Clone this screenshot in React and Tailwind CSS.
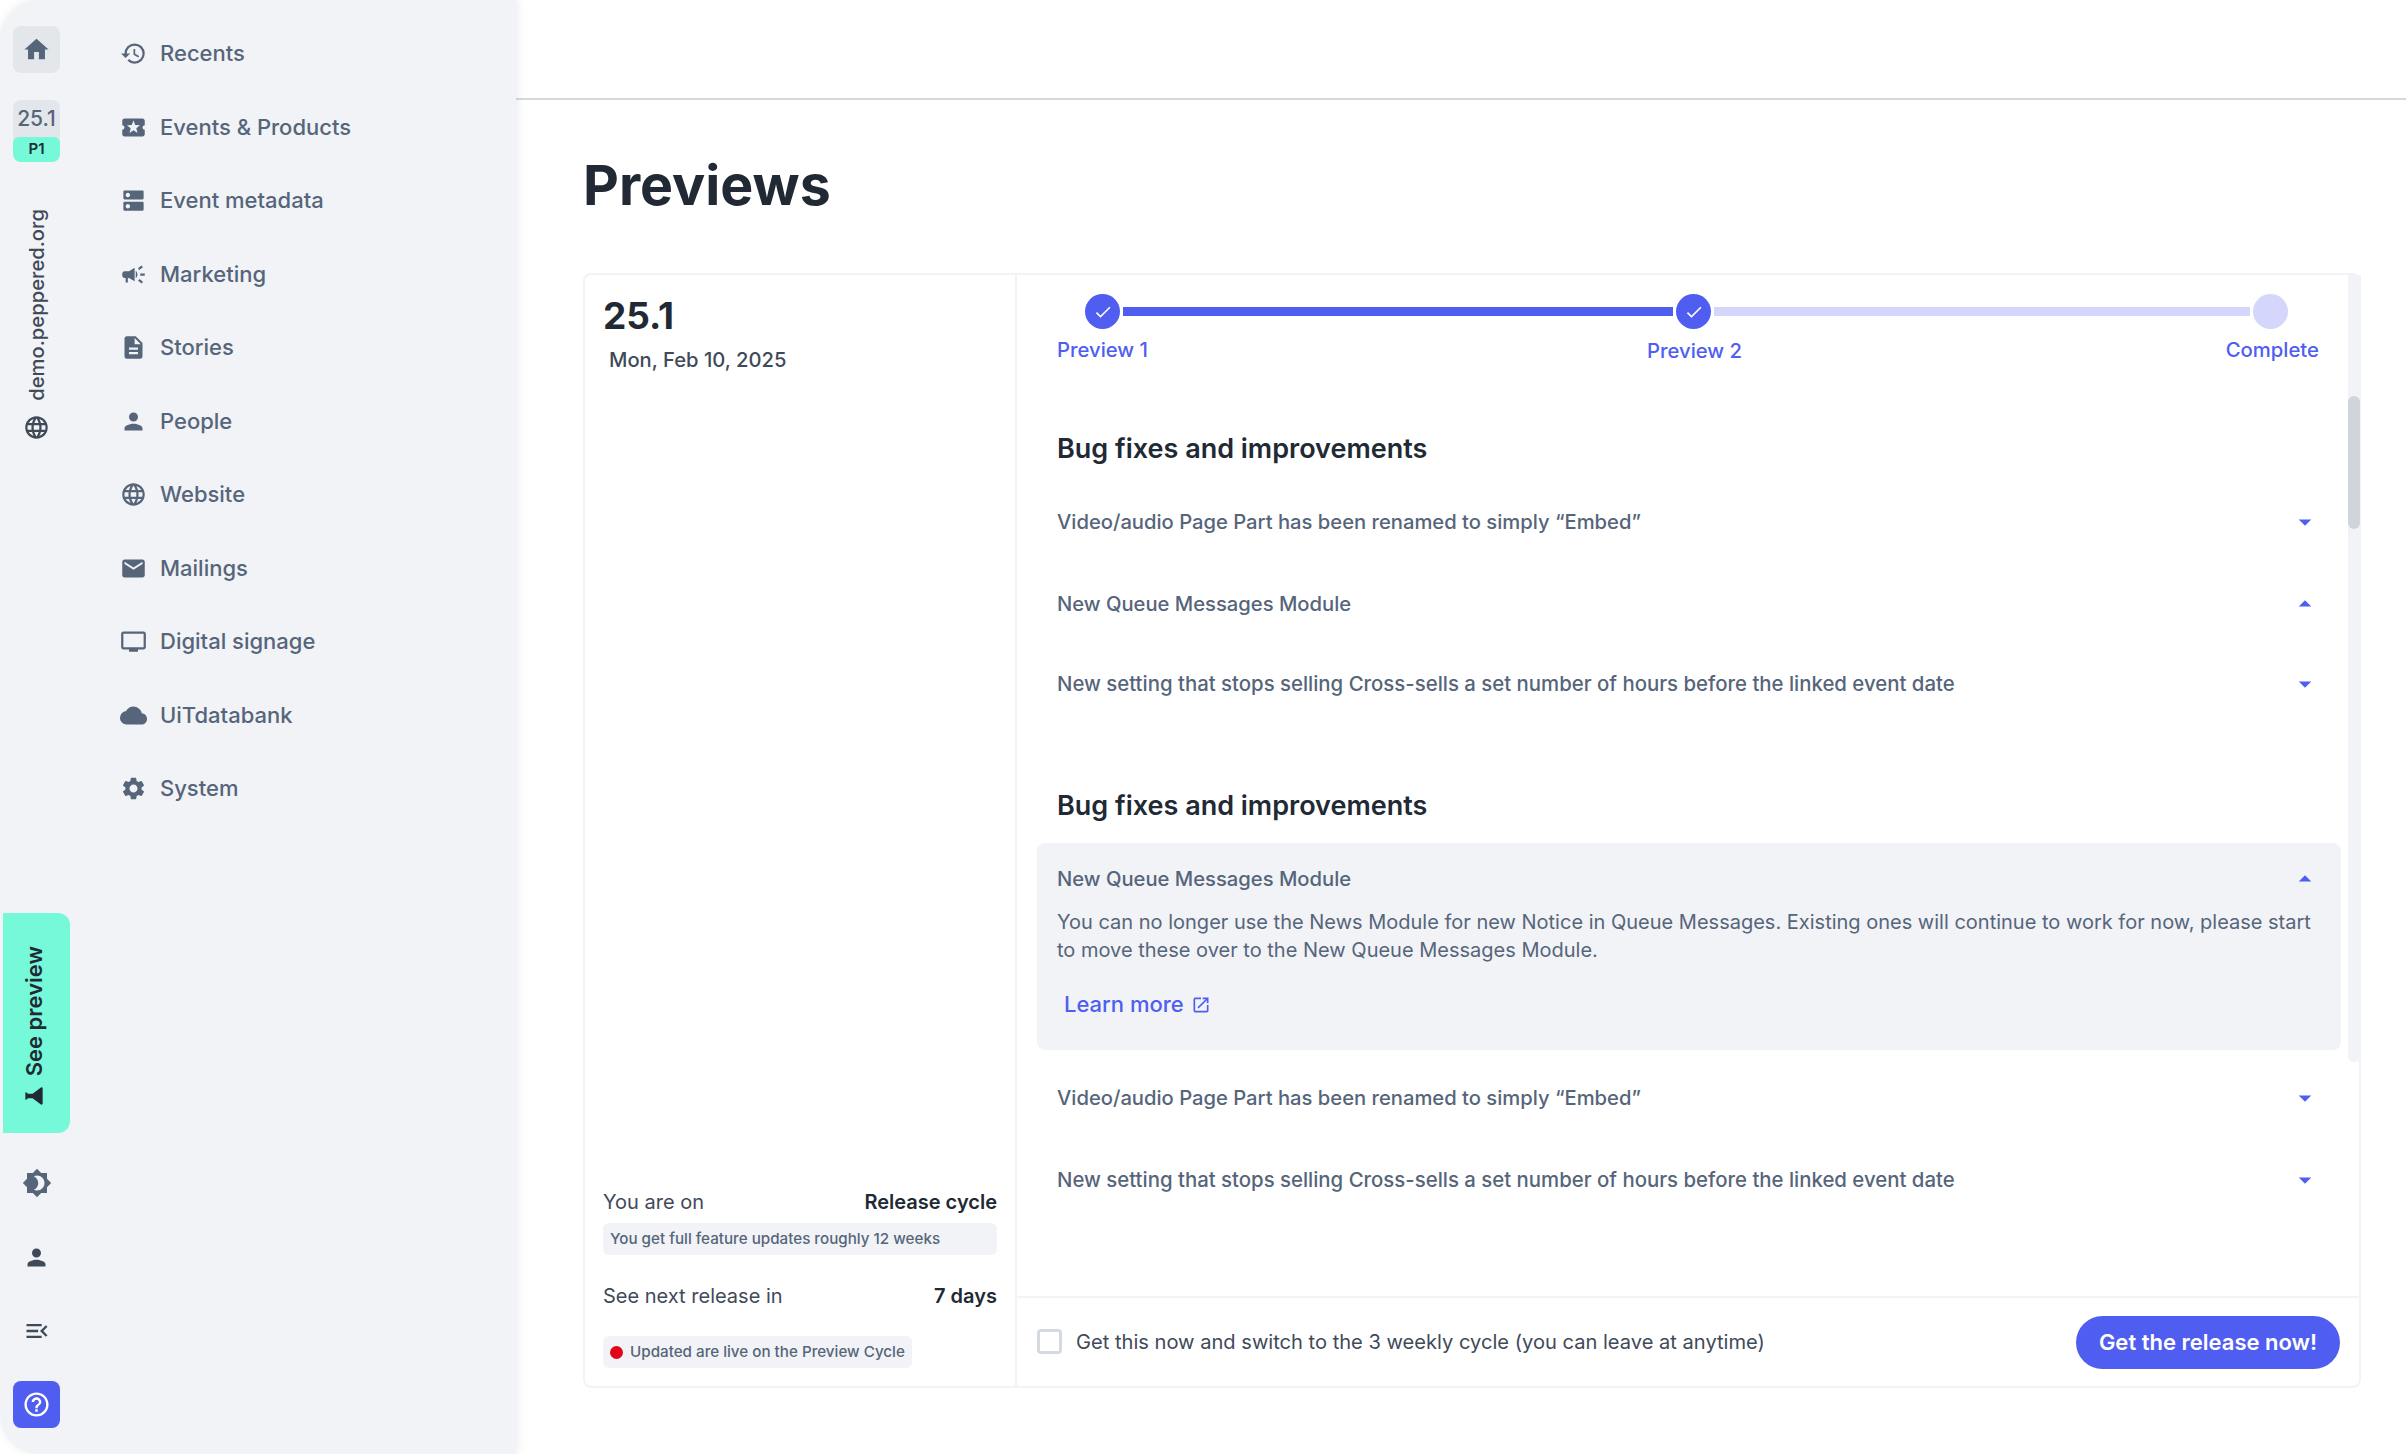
import React from "react";
import {
  MdHome, MdHistory, MdLocalActivity, MdDns, MdCampaign, MdDescription, MdPerson,
  MdLanguage, MdEmail, MdTv, MdCloud, MdSettings, MdBrightness4, MdMenuOpen,
  MdHelpOutline, MdScience, MdOpenInNew, MdArrowDropDown, MdArrowDropUp, MdCheck
} from "react-icons/md";

const navItems = [
  { label: "Recents", icon: MdHistory },
  { label: "Events & Products", icon: MdLocalActivity },
  { label: "Event metadata", icon: MdDns },
  { label: "Marketing", icon: MdCampaign },
  { label: "Stories", icon: MdDescription },
  { label: "People", icon: MdPerson },
  { label: "Website", icon: MdLanguage },
  { label: "Mailings", icon: MdEmail },
  { label: "Digital signage", icon: MdTv },
  { label: "UiTdatabank", icon: MdCloud },
  { label: "System", icon: MdSettings },
];

function Rail() {
  return (
    <div className="w-[73px] shrink-0 flex flex-col items-center pt-[26px] pb-[26px]">
      <div className="w-[47px] h-[47px] rounded-lg bg-[#e3e6eb] flex items-center justify-center text-[#56657a]">
        <MdHome size={29} />
      </div>
      <div className="mt-[27px] w-[47px] h-[62px] rounded-lg bg-[#e3e6eb] flex flex-col items-center overflow-hidden">
        <div className="h-[37px] flex items-center text-[21px] font-medium text-[#56657a]">25.1</div>
        <div className="w-full h-[25px] rounded-md bg-[#76f9d8] flex items-center justify-center text-[15px] font-semibold text-[#212a34]">P1</div>
      </div>
      <div className="mt-[47px] [writing-mode:vertical-rl] rotate-180 text-[20.2px] font-medium leading-[24px] text-[#3f4a59]">
        demo.peppered.org
      </div>
      <MdLanguage size={27} className="mt-[13px] text-[#3f4a59]" />

      <div className="mt-auto w-[67px] h-[220px] rounded-r-xl bg-[#76f9d8] pt-[9px] pr-[6px] flex flex-col items-center justify-center gap-[6px] text-[#212a34]">
        <div className="[writing-mode:vertical-rl] rotate-180 text-[22px] font-semibold leading-[24px]">See preview</div>
        <MdScience size={26} className="-rotate-90" />
      </div>
      <div className="mt-[35px] h-[30px] flex items-center text-[#56657a]"><MdBrightness4 size={30} /></div>
      <div className="mt-[44px] h-[30px] flex items-center text-[#3f4a59]"><MdPerson size={27} /></div>
      <div className="mt-[44px] h-[30px] flex items-center text-[#3f4a59]"><MdMenuOpen size={28} /></div>
      <div className="mt-[35px] w-[47px] h-[47px] rounded-lg bg-[#4f5ef0] flex items-center justify-center text-white">
        <MdHelpOutline size={29} />
      </div>
    </div>
  );
}

function Sidebar() {
  return (
    <aside className="relative z-10 w-[516px] shrink-0 h-full flex bg-[#f1f3f7] rounded-l-[40px] shadow-[1px_0_8px_rgba(60,70,90,0.12)]">
      <Rail />
      <nav className="flex flex-col pt-[17px] pl-[46px]">
        {navItems.map(({ label, icon: Icon }) => (
          <div key={label} className="h-[73.5px] flex items-center text-[#56657a]">
            <span className="w-[28px] flex justify-center"><Icon size={27} /></span>
            <span className="ml-[13px] text-[22px] font-medium">{label}</span>
          </div>
        ))}
      </nav>
    </aside>
  );
}

function Row({ title, height = "h-[80px]", size = "text-[20.2px]" }) {
  return (
    <div className={`${height} pl-[20px] pr-[21px] flex items-center justify-between`}>
      <span className={`${size} font-medium text-[#56657a]`}>{title}</span>
      <MdArrowDropDown size={30} className="text-[#4f5ef0]" />
    </div>
  );
}

function OpenRow({ title }) {
  return (
    <div className="h-[80px] pl-[20px] pr-[21px] flex items-center justify-between">
      <span className="text-[20.2px] font-medium text-[#56657a]">{title}</span>
      <MdArrowDropUp size={30} className="text-[#4f5ef0]" />
    </div>
  );
}

function Stepper() {
  return (
    <div className="pl-[20px] pr-[22px] pt-[19px]">
      <div className="flex items-center pl-[28px] gap-[3px]">
        <span className="w-[35px] h-[35px] rounded-full bg-[#4f5ef0] flex items-center justify-center text-white"><MdCheck size={20} /></span>
        <span className="w-[550px] h-[9px] bg-[#4f5ef0]" />
        <span className="w-[35px] h-[35px] rounded-full bg-[#4f5ef0] flex items-center justify-center text-white"><MdCheck size={20} /></span>
        <span className="w-[536px] h-[9px] bg-[#d4d7fb]" />
        <span className="w-[35px] h-[35px] rounded-full bg-[#d4d7fb]" />
      </div>
      <div className="mt-[6px] flex text-[20.3px] font-medium text-[#4f5ef0]">
        <span>Preview 1</span>
        <span className="ml-[499px] mt-px">Preview 2</span>
        <span className="ml-auto">Complete</span>
      </div>
    </div>
  );
}

function ReleaseNotes() {
  return (
    <div className="flex h-[1021px] shrink-0">
      <div className="flex-1 min-w-0 pl-[20px] pr-[7px] overflow-hidden">
        <Stepper />
        <h2 className="mt-[66px] pl-[20px] text-[27px] leading-[34px] font-semibold text-[#212a34]">Bug fixes and improvements</h2>
        <div className="mt-[14px]">
          <Row title="Video/audio Page Part has been renamed to simply “Embed”" height="h-[84px]" />
          <OpenRow title="New Queue Messages Module" />
          <Row title="New setting that stops selling Cross-sells a set number of hours before the linked event date" size="text-[20.37px]" />
        </div>
        <h2 className="mt-[65px] pl-[20px] text-[27px] leading-[34px] font-semibold text-[#212a34]">Bug fixes and improvements</h2>
        <div className="mt-[20px] h-[207px] rounded-lg bg-[#f1f3f7] px-[20px] pt-[18px]">
          <div className="flex items-center justify-between pr-px h-[36px]">
            <span className="text-[20.2px] font-medium text-[#56657a]">New Queue Messages Module</span>
            <MdArrowDropUp size={30} className="text-[#4f5ef0]" />
          </div>
          <p className="mt-[11px] text-[20px] leading-[28px] text-[#56657a]">
            You can no longer use the News Module for new Notice in Queue Messages. Existing ones will continue to work for now, please start to move these over to the New Queue Messages Module.
          </p>
          <div className="mt-[24px] ml-[7px] flex items-center gap-[7px] text-[#4f5ef0] text-[22px] font-medium">
            Learn more <MdOpenInNew size={20} />
          </div>
        </div>
        <div className="mt-[7px]">
          <Row title="Video/audio Page Part has been renamed to simply “Embed”" height="h-[82px]" />
          <Row title="New setting that stops selling Cross-sells a set number of hours before the linked event date" height="h-[82px]" size="text-[20.37px]" />
        </div>
      </div>
      <div className="w-[13px] h-[787px] shrink-0 -mr-[2px] rounded-b-md bg-[#f1f3f7] overflow-hidden">
        <div className="mt-[121px] h-[133px] w-[12px] rounded-md bg-[#cfd5da]" />
      </div>
    </div>
  );
}

export default function App() {
  return (
    <div className="h-[1454px] w-[2406px] flex bg-white overflow-hidden font-['Inter',sans-serif]">
      <Sidebar />
      <main className="flex-1 min-w-0 flex flex-col">
        <div className="h-[100px] shrink-0 border-b-2 border-[#d5d9de]" />
        <div className="pl-[67px] pr-[45px]">
          <h1 className="mt-[51px] text-[55.4px] leading-[68px] font-bold text-[#212a34]">Previews</h1>
          <div className="mt-[54px] h-[1115px] flex rounded-lg border-2 border-[#f1f3f7]">
            <section className="w-[432px] shrink-0 border-r-2 border-[#f1f3f7] pl-[18px] pr-[18px] flex flex-col">
              <div className="mt-[18px] text-[37px] leading-[46px] font-bold text-[#212a34]">25.1</div>
              <div className="mt-[6px] ml-[6px] text-[20.2px] font-medium text-[#3f4a59]">Mon, Feb 10, 2025</div>
              <div className="mt-auto flex justify-between text-[20px] text-[#3f4a59]">
                <span>You are on</span><span className="font-semibold text-[#212a34]">Release cycle</span>
              </div>
              <div className="mt-[6px] h-[32px] rounded-md bg-[#f1f3f7] px-[7px] flex items-center text-[15.2px] font-medium text-[#56657a]">
                You get full feature updates roughly 12 weeks
              </div>
              <div className="mt-[26px] flex justify-between text-[20px] text-[#3f4a59]">
                <span>See next release in</span><span className="font-semibold text-[#212a34]">7 days</span>
              </div>
              <div className="mt-[25px] mb-[18px] self-start h-[32px] rounded-md bg-[#f1f3f7] px-[7px] flex items-center gap-[7px] text-[15.2px] font-medium text-[#56657a]">
                <span className="w-[13px] h-[13px] rounded-full bg-[#e0051a]" />
                Updated are live on the Preview Cycle
              </div>
            </section>
            <section className="flex-1 min-w-0 flex flex-col">
              <ReleaseNotes />
              <div className="flex-1 border-t-2 border-[#f1f3f7] pl-[20px] pr-[19px] flex items-center justify-between">
                <label className="flex items-center gap-[14px] text-[20.1px] text-[#3f4a59]">
                  <span className="w-[25px] h-[25px] rounded border-[3px] border-[#d5d9e0]" />
                  Get this now and switch to the 3 weekly cycle (you can leave at anytime)
                </label>
                <button className="w-[264px] h-[53px] rounded-full bg-[#4f5ef0] text-white text-[22px] font-semibold">Get the release now!</button>
              </div>
            </section>
          </div>
        </div>
      </main>
    </div>
  );
}
